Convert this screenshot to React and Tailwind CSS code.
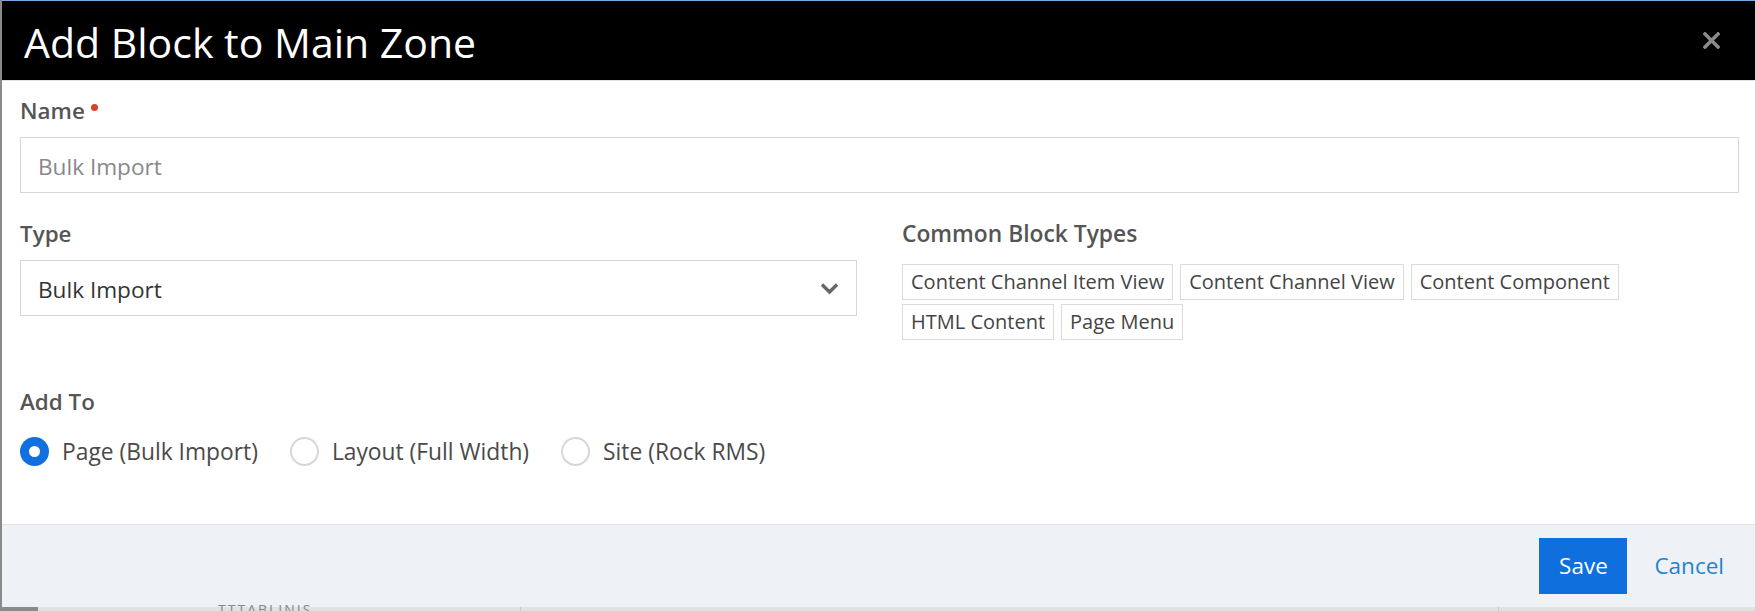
import React, { useState } from 'react'

const TAGS = [
    'Content Channel Item View',
    'Content Channel View',
    'Content Component',
    'HTML Content',
    'Page Menu',
]

const TARGETS = [
    { id: 'page', label: 'Page (Bulk Import)' },
    { id: 'layout', label: 'Layout (Full Width)' },
    { id: 'site', label: 'Site (Rock RMS)' },
]

const Radio = ({ checked, label, onClick }) => (
    <button type="button" onClick={onClick} className="flex items-center gap-[13px]">
        {checked ? (
            <span className="flex h-[29px] w-[29px] items-center justify-center rounded-full bg-[#1170de]">
                <span className="h-[11px] w-[11px] rounded-full bg-white"></span>
            </span>
        ) : (
            <span className="h-[29px] w-[29px] rounded-full border-2 border-[#d7d7d7] bg-white"></span>
        )}
        <span className="text-[22.8px] leading-[29px] text-[#4a4a4a]">{label}</span>
    </button>
)

const App = () => {
    const [target, setTarget] = useState('page')
    const [name, setName] = useState('')

    return (
        <div className="relative h-[611px] w-full overflow-hidden bg-[#e1e1e1] font-['Open_Sans',sans-serif]">
            <div className="flex h-[607px] flex-col border-l-2 border-[#8a8a8a] bg-white">
                {/* Header */}
                <div className="flex h-[81px] shrink-0 items-center justify-between border-t border-b border-t-[#7aa7de] border-b-[#e3e3e3] bg-black pl-[22px] pr-[35px]">
                    <h2 className="pt-[4px] text-[41px] leading-none text-white">Add Block to Main Zone</h2>
                    <button type="button" className="text-[#8a8a8a]">
                        <svg width="17" height="17" viewBox="0 0 17 17">
                            <path d="M2 2 L15 15 M15 2 L2 15" stroke="currentColor" strokeWidth="3.6" strokeLinecap="square" />
                        </svg>
                    </button>
                </div>

                {/* Body */}
                <div className="flex-1 pl-[18px] pr-[16px] pt-[16px]">
                    <label className="flex items-start text-[22.4px] font-semibold leading-[28px] text-[#555]">
                        Name
                        <span className="ml-[6px] mt-[7px] h-[7px] w-[7px] rounded-full bg-[#d9412e]"></span>
                    </label>
                    <input
                        value={name}
                        onChange={(e) => setName(e.target.value)}
                        placeholder="Bulk Import"
                        className="mt-[12px] h-[56px] w-full border border-[#d6d6d6] px-[17px] pt-[2px] text-[22.6px] text-[#333] outline-none placeholder:text-[#888]"
                    />

                    <div className="mt-[27px] grid grid-cols-2 gap-x-[45px]">
                        <div>
                            <div className="text-[22.4px] font-semibold leading-[28px] text-[#555]">Type</div>
                            <div className="mt-[12px] flex h-[56px] items-center justify-between border border-[#d6d6d6] pl-[17px] pr-[17px]">
                                <span className="pt-[3px] text-[22.6px] text-[#333]">Bulk Import</span>
                                <svg width="19" height="13" viewBox="0 0 19 13" className="text-[#666]">
                                    <path d="M2 2.5 L9.5 10 L17 2.5" fill="none" stroke="currentColor" strokeWidth="3.4" />
                                </svg>
                            </div>
                        </div>
                        <div>
                            <div className="text-[22.8px] font-semibold leading-[28px] text-[#555]">Common Block Types</div>
                            <div className="mt-[16px] flex w-[730px] flex-wrap gap-x-[7px] gap-y-[4px]">
                                {TAGS.map((t) => (
                                    <span key={t} className="flex h-[36px] items-center border border-[#dcdcdc] px-[8px] text-[20px] text-[#444]">
                                        {t}
                                    </span>
                                ))}
                            </div>
                        </div>
                    </div>

                    <div className="mt-[48px] text-[22.4px] font-semibold leading-[28px] text-[#555]">Add To</div>
                    <div className="mt-[21px] flex items-center gap-[32px]">
                        {TARGETS.map((t) => (
                            <Radio key={t.id} label={t.label} checked={target === t.id} onClick={() => setTarget(t.id)} />
                        ))}
                    </div>
                </div>

                {/* Footer */}
                <div className="flex h-[83px] shrink-0 items-center justify-end gap-[27px] border-t border-[#e2e4e7] bg-[#eef1f5] pr-[31px]">
                    <button type="button" className="h-[56px] w-[88px] bg-[#0e6fdd] text-[22.5px] text-white">Save</button>
                    <button type="button" className="text-[22.5px] text-[#1f84cf]">Cancel</button>
                </div>
            </div>

            {/* page behind the modal */}
            <div className="flex h-[4px]">
                <div className="w-[38px] bg-[#8a8a8a]"></div>
                <div className="relative w-[483px] border-r border-[#c8c8c8]">
                    <span className="absolute left-[180px] top-[-4px] text-[14px] leading-none tracking-[2px] text-[#888]">TTTABLINIS</span>
                </div>
                <div className="w-[978px] border-r border-[#c8c8c8]"></div>
            </div>
        </div>
    )
}

export default App
